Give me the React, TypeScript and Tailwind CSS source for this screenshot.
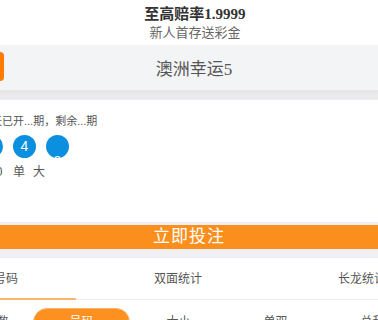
import React from "react";

const serif = "font-['Liberation_Serif','Noto_Sans_CJK_SC',serif]";
const sans = "font-['Liberation_Sans','Noto_Sans_CJK_SC',sans-serif]";

function Ball({ n, sunk }: { n: number; sunk?: boolean }) {
  return (
    <div className="w-[23px] h-[23px] rounded-full bg-[#0b8fdf] overflow-hidden shrink-0 flex justify-center">
      <span
        className={`text-white text-[14px] leading-[23px] ${sans} ${sunk ? "mt-[15px]" : ""}`}
      >
        {n}
      </span>
    </div>
  );
}

export default function App() {
  const tabs = ["开奖号码", "双面统计", "长龙统计"];
  const subs = ["冷热指数", "号码", "大小", "单双", "总和"];

  return (
    <div className={`w-[378px] h-[320px] overflow-hidden bg-white ${serif}`}>
      {/* top promo */}
      <div className="h-[45px] flex flex-col items-center pt-[5px] pl-[12px]">
        <div className="text-[15px] leading-[18px] font-bold text-[#333]">至高赔率1.9999</div>
        <div className="text-[13px] leading-[19px] text-[#666]">新人首存送彩金</div>
      </div>

      {/* lottery header */}
      <div className="h-[45px] bg-[#f3f4f6] flex items-center relative">
        <div className="absolute left-[-8px] top-[7px] w-[12px] h-[29px] rounded-[4px] bg-[#ff7c00]" />
        <div className="w-full text-center text-[17px] text-[#555] mt-[5px] pl-[10px]">澳洲幸运5</div>
      </div>
      <div className="h-[10px] bg-gradient-to-b from-[#e6e6e8] to-[#ededef]" />

      {/* draw info */}
      <div className="h-[122px] bg-white pt-[13px]">
        <div className={`ml-[-20px] text-[11px] leading-[16px] text-[#555] whitespace-nowrap ${sans}`}>
          今天已开...期，剩余...期
        </div>
        <div className="flex gap-[10px] ml-[-20px] mt-[6px]">
          <Ball n={7} />
          <Ball n={4} />
          <Ball n={3} sunk />
        </div>
        <div className={`flex ml-[-11px] mt-[6px] text-[12px] leading-[16px] text-[#555] whitespace-nowrap ${sans}`}>
          <span className="w-[24px]">10</span>
          <span className="w-[20px]">单</span>
          <span>大</span>
        </div>
      </div>

      {/* bet button */}
      <div className="bg-[#efeff4] pt-[3px] pb-[9px]">
        <div className={`h-[24px] bg-[#fb8f1e] text-white text-[17px] leading-[24px] text-center tracking-[1px] ${sans}`}>
          立即投注
        </div>
      </div>

      {/* tabs */}
      <div className="relative border-b border-[#eeeeee]">
        <div className="flex ml-[-98px] h-[41px] items-center">
          {tabs.map((t) => (
            <div key={t} className={`w-[184px] shrink-0 text-center text-[12px] text-[#555] ${sans}`}>
              {t}
            </div>
          ))}
        </div>
        <div className="absolute left-0 bottom-[-1px] w-[76px] h-[2px] bg-[#fcb46c]" />
      </div>

      {/* sub tabs */}
      <div className="flex ml-[-64px] mt-[8px]">
        {subs.map((s, i) => (
          <div
            key={s}
            className={`w-[97px] shrink-0 h-[28px] flex items-center justify-center text-[12px] ${sans} ${
              i === 1 ? "bg-[#fc9020] text-white rounded-[14px] border border-[#fdb46a]" : "text-[#555]"
            }`}
          >
            {s}
          </div>
        ))}
      </div>
    </div>
  );
}
